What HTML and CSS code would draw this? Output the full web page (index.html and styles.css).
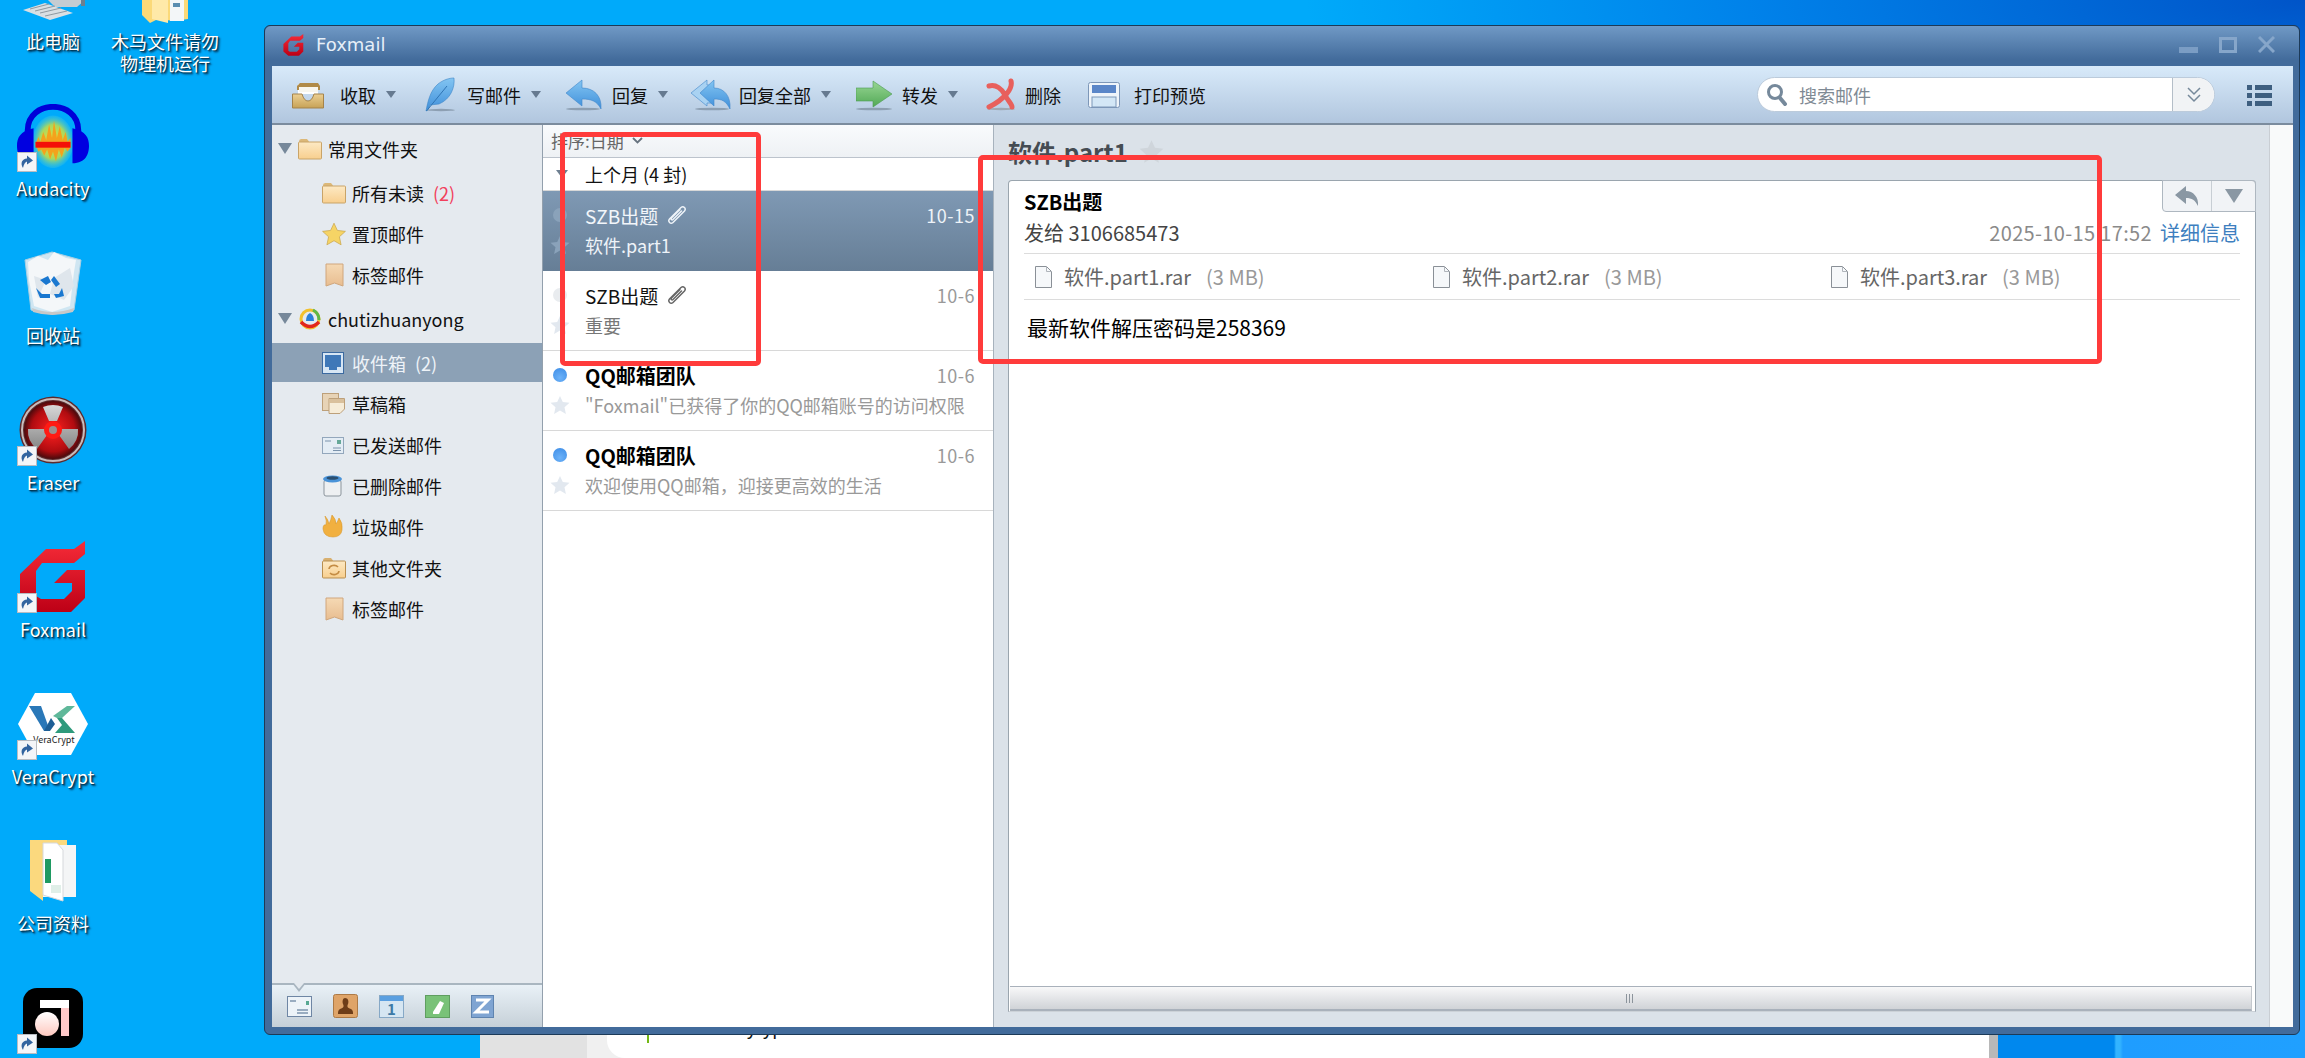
FILE: index.html
```html
<!DOCTYPE html>
<html lang="zh-CN">
<head>
    <meta charset="UTF-8">
    <title>Foxmail</title>
    <link rel="stylesheet" href="styles.css">
</head>
<body>
    <svg class="sprite" width="0" height="0">
        <defs>
            <linearGradient id="gRed" x1="0" y1="0" x2="0" y2="1"><stop offset="0" stop-color="#f62c38"/><stop offset="1" stop-color="#bd0016"/></linearGradient>
            <linearGradient id="gFolder" x1="0" y1="0" x2="0" y2="1"><stop offset="0" stop-color="#fde9c4"/><stop offset="1" stop-color="#f8cf8e"/></linearGradient>
            <linearGradient id="gTag" x1="0" y1="0" x2="0" y2="1"><stop offset="0" stop-color="#f5d9b4"/><stop offset="1" stop-color="#e8bd90"/></linearGradient>
            <linearGradient id="gBlue" x1="0" y1="0" x2="0" y2="1"><stop offset="0" stop-color="#83c5f2"/><stop offset="1" stop-color="#3f8fda"/></linearGradient>
            <linearGradient id="gGreen" x1="0" y1="0" x2="0" y2="1"><stop offset="0" stop-color="#98d694"/><stop offset="1" stop-color="#52a956"/></linearGradient>
            <linearGradient id="gTray" x1="0" y1="0" x2="0" y2="1"><stop offset="0" stop-color="#eccf92"/><stop offset="1" stop-color="#c7a256"/></linearGradient>
            <radialGradient id="gWave"><stop offset="0" stop-color="#f6e030"/><stop offset=".65" stop-color="#a8d860"/><stop offset="1" stop-color="#40c8e0" stop-opacity=".3"/></radialGradient>
            <radialGradient id="gEraser"><stop offset="0" stop-color="#ff2020"/><stop offset=".75" stop-color="#b00c10"/><stop offset="1" stop-color="#4a0a0c"/></radialGradient>
            <linearGradient id="gBlade" x1="0" y1="0" x2="0" y2="1"><stop offset="0" stop-color="#d8d8d8"/><stop offset="1" stop-color="#868686"/></linearGradient>
            <linearGradient id="gBall" x1="0" y1="0" x2="0" y2="1"><stop offset="0" stop-color="#fff"/><stop offset="1" stop-color="#ffc9c0"/></linearGradient>

            <symbol id="i-g" viewBox="0 0 66 72">
                <path fill="url(#gRed)" d="M26 8H54L65 0V13L54 22H22L16 30V55L21 58H44L52 50V42H34L47 29H65V57L51 71H16L0 57V33Z"/>
            </symbol>
            <symbol id="i-short" viewBox="0 0 20 20">
                <rect x=".5" y=".5" width="19" height="19" fill="#f4f5f8" stroke="#b9bcc2"/>
                <path fill="#33649f" d="M6 16C3 11 5 7 10 6.500V3.500L16 8.500 10 12.500V9.500C8 10 7 12 6 16Z"/>
            </symbol>
            <symbol id="i-folder" viewBox="0 0 24 22">
                <path fill="#dcb878" d="M1 3.500Q1 1 3 1H9L11 3.500V6H1Z"/>
                <rect x=".5" y="4" width="23" height="17" rx="1" fill="url(#gFolder)" stroke="#c9a468"/>
            </symbol>
            <symbol id="i-tag" viewBox="0 0 22 24">
                <path fill="url(#gTag)" stroke="#d0a67c" d="M3 1H20V23L11.500 20 3 23Z"/>
            </symbol>
            <symbol id="i-star" viewBox="0 0 20 20">
                <path fill="currentColor" d="M10 1L12.800 7 19.500 7.800 14.500 12.300 15.900 19 10 15.600 4.100 19 5.500 12.300 .5 7.800 7.200 7Z"/>
            </symbol>
            <symbol id="i-file" viewBox="0 0 17 22">
                <path fill="#f6f8fa" stroke="#8a9097" d="M.5 .5H11.500L16.500 5.500V21.500H.5Z"/>
                <path fill="none" stroke="#b0b5bb" d="M11.500 .5V5.500H16.500"/>
            </symbol>
            <symbol id="i-clip" viewBox="0 0 20 20">
                <path fill="none" stroke="currentColor" stroke-width="1.500" stroke-linecap="round" d="M6 17.500L17.500 6C19.500 3.500 16.500 .5 14 2.500L2.500 14C.5 16.500 3.500 19.500 6 17.500M14.500 6L6 14.500C5 15.500 3.500 14.500 4.500 13L13 4.500"/>
            </symbol>
        </defs>
    </svg>

    <div class="desk-corner"></div>

    <div class="under-window">
        <div class="under-rail"></div>
        <div class="under-nav"></div>
        <div class="under-card">
            <span class="under-tick"></span>
            <span class="under-text">About Anytype</span>
        </div>
    </div>

    <div class="desktop-grid">
        <div class="desk-icon">
            <div class="desk-pic">
                <svg width="72" height="72" viewBox="0 0 72 72">
                    <path fill="#c4ccd2" d="M31 47H68L60 54 38 54Z"/>
                    <path fill="#6d7f8e" d="M64 47H68V53H64Z"/>
                    <path fill="#d9dfe3" d="M6 57L28 50 56 60 33 67Z"/>
                    <path stroke="#8f99a1" fill="none" d="M13 56L32 51M18 58L38 53M23 60L44 55M28 63L50 58"/>
                </svg>
            </div>
            <span class="desk-label">此电脑</span>
        </div>
        <div class="desk-icon desk-icon-wide">
            <div class="desk-pic">
                <svg width="50" height="72" viewBox="0 0 50 72">
                    <path fill="#fbd978" d="M2 46H48V66L34 68 18 66 10 70 2 62Z"/>
                    <path fill="#f3f6f8" d="M30 46H44V68H30Z"/>
                    <path fill="#5a8db0" d="M33 50H40V54H33Z"/>
                    <path fill="#ffe9a8" d="M12 46H28V70L12 66Z"/>
                </svg>
            </div>
            <span class="desk-label">木马文件请勿<br>物理机运行</span>
        </div>

        <div class="desk-icon">
            <div class="desk-pic">
                <svg width="74" height="64" viewBox="0 0 74 64">
                    <ellipse cx="37" cy="38" rx="21" ry="27" fill="url(#gWave)"/>
                    <path fill="none" stroke="#0000d8" stroke-width="6" d="M11 34V26C11 -6 63 -6 63 26V34"/>
                    <path fill="#0000e0" d="M17 24V60C3 60 0 50 0 42S3 27 17 24ZM57 24V60C71 60 74 50 74 42S71 27 57 24Z"/>
                    <path fill="#f4a21c" d="M19 40L22 33 24 38 27 28 30 36 33 20 36 34 38 16 41 34 44 22 47 36 50 28 52 38 55 34V44L52 48 49 44 46 54 43 46 40 58 37 48 34 56 31 46 28 52 25 46 22 48Z"/>
                    <rect x="19" y="38" width="36" height="6" fill="#f41008"/>
                </svg>
                <svg class="short-badge" width="20" height="20"><use href="#i-short"/></svg>
            </div>
            <span class="desk-label">Audacity</span>
        </div>
        <div class="desk-icon"></div>

        <div class="desk-icon">
            <div class="desk-pic">
                <svg width="58" height="66" viewBox="0 0 58 66">
                    <path fill="#cfe6f2" stroke="#a9cfe2" d="M1 10L28 2 57 10 50 60Q28 68 7 60Z"/>
                    <path fill="#f4f7f9" d="M4 12L14 6 24 10 30 2 42 8 52 10 50 22 46 56 28 62 10 56 5 30Z"/>
                    <path fill="#dfe6ec" d="M30 28L46 18 50 36 40 50 26 44ZM10 26L22 30 14 48Z"/>
                    <path fill="#1a78d0" d="M16 30L24 26 27 32 22 35ZM30 26L36 34 32 37 27 30ZM12 38L18 44H26V48H16ZM38 38L40 46 32 48 30 44H35Z"/>
                    <path fill="#c8c8c8" d="M8 58Q28 66 50 58L49 62Q28 68 9 62Z"/>
                </svg>
            </div>
            <span class="desk-label">回收站</span>
        </div>
        <div class="desk-icon"></div>

        <div class="desk-icon">
            <div class="desk-pic">
                <svg width="68" height="70" viewBox="0 0 68 70">
                    <circle cx="34" cy="35" r="33.500" fill="#5d2b2d"/>
                    <circle cx="34" cy="35" r="31" fill="none" stroke="#c9bcbc" stroke-width="2"/>
                    <circle cx="34" cy="35" r="29" fill="url(#gEraser)"/>
                    <path fill="url(#gBlade)" d="M24 12Q34 8 44 12L38 26H30ZM9 34H26L28 40 18 54Q8 46 9 34ZM59 34H42L40 40 50 54Q60 46 59 34Z"/>
                    <circle cx="34" cy="35" r="9" fill="#ff1a14"/>
                    <circle cx="34" cy="35" r="4" fill="#9c8f8f"/>
                </svg>
                <svg class="short-badge" width="20" height="20"><use href="#i-short"/></svg>
            </div>
            <span class="desk-label">Eraser</span>
        </div>
        <div class="desk-icon"></div>

        <div class="desk-icon">
            <div class="desk-pic">
                <svg width="66" height="72"><use href="#i-g"/></svg>
                <svg class="short-badge" width="20" height="20"><use href="#i-short"/></svg>
            </div>
            <span class="desk-label">Foxmail</span>
        </div>
        <div class="desk-icon"></div>

        <div class="desk-icon">
            <div class="desk-pic">
                <svg width="72" height="64" viewBox="0 0 72 64">
                    <path fill="#fff" d="M18 1H54L71 32 54 63H18L1 32Z"/>
                    <path fill="#2a78b8" d="M12 14H24L33 39H27Z"/>
                    <path fill="#1d5f96" d="M27 39L34 26 38 32 33 39Z"/>
                    <path fill="#5fb89a" d="M36 24L50 14H58L45 26H40Z"/>
                    <path fill="#2e9a7c" d="M45 26L58 41H38L45 33 40 26Z"/>
                    <text x="37" y="51" class="vera-text">VeraCrypt</text>
                </svg>
                <svg class="short-badge" width="20" height="20"><use href="#i-short"/></svg>
            </div>
            <span class="desk-label">VeraCrypt</span>
        </div>
        <div class="desk-icon"></div>

        <div class="desk-icon">
            <div class="desk-pic">
                <svg width="48" height="64" viewBox="0 0 48 64">
                    <path fill="#f4f5f6" d="M10 6H47V58H10Z"/>
                    <path fill="#fbd97e" d="M1 1H38V6H14V62L1 52Z"/>
                    <path fill="#fff" stroke="#d5d8db" d="M14 4H28L34 11V62L14 56Z"/>
                    <path fill="#1f9a62" d="M16 20H22V44H16Z"/>
                    <path fill="#e0efe8" d="M22 46H32V54H22Z"/>
                </svg>
            </div>
            <span class="desk-label">公司资料</span>
        </div>
        <div class="desk-icon"></div>

        <div class="desk-icon">
            <div class="desk-pic">
                <svg width="60" height="60" viewBox="0 0 60 60">
                    <rect width="60" height="60" rx="14" fill="#000"/>
                    <rect x="17" y="12" width="29" height="8" fill="#fff"/>
                    <rect x="38" y="20" width="8" height="28" fill="#ffc9c9"/>
                    <circle cx="24" cy="36" r="12" fill="url(#gBall)"/>
                </svg>
                <svg class="short-badge" width="20" height="20"><use href="#i-short"/></svg>
            </div>
        </div>
    </div>

    <div class="fox-window">
        <div class="title-bar">
            <svg class="title-logo" width="21" height="22"><use href="#i-g"/></svg>
            <span class="title-text">Foxmail</span>
            <div class="win-controls">
                <svg width="19" height="16" viewBox="0 0 19 16"><rect y="10" width="19" height="6" fill="#7b9dc4"/></svg>
                <svg width="18" height="16" viewBox="0 0 18 16"><rect x="1.500" y="1.500" width="15" height="13" fill="none" stroke="#86a6ca" stroke-width="3"/></svg>
                <svg width="17" height="17" viewBox="0 0 17 17"><path stroke="#86a6ca" stroke-width="3" d="M1 1L16 16M16 1L1 16"/></svg>
            </div>
        </div>

        <div class="toolbar">
            <div class="tools">
                <div class="tool">
                    <svg width="48" height="34" viewBox="0 0 48 34">
                        <path fill="#fff" d="M6 6H26V16H6Z"/>
                        <path fill="#b08a48" d="M5 8L8 5H26L28 8V12H5Z"/>
                        <path fill="#f8f6ee" d="M7 9H26V14H7Z"/>
                        <path fill="url(#gTray)" stroke="#a5834a" d="M.5 16H10Q12 23 16 23T22 16H31.500V30H.5Z"/>
                    </svg>
                    <span>收取</span><i class="caret"></i>
                </div>
                <div class="tool">
                    <svg width="42" height="36" viewBox="0 0 42 36">
                        <path fill="url(#gBlue)" stroke="#3b84c6" stroke-width=".6" d="M29 1C30 10 26 22 14 27L5 28 3 33 1 34C3 24 5 14 13 7 18 3 24 1 29 1Z"/>
                        <path fill="none" stroke="#2f74b4" d="M1.500 34L22 9"/>
                        <ellipse cx="16" cy="33" rx="14" ry="1.200" fill="#8d9fb2"/>
                    </svg>
                    <span>写邮件</span><i class="caret"></i>
                </div>
                <div class="tool">
                    <svg width="47" height="36" viewBox="0 0 47 36">
                        <ellipse cx="18" cy="32" rx="17" ry="1.300" fill="#8d9fb2"/>
                        <path fill="url(#gBlue)" stroke="#4187c9" stroke-width=".6" d="M1 16L17 3V11C29 11 37 19 36 32 32 24 26 22 17 22V29Z"/>
                    </svg>
                    <span>回复</span><i class="caret"></i>
                </div>
                <div class="tool">
                    <svg width="49" height="36" viewBox="0 0 49 36">
                        <ellipse cx="22" cy="32" rx="17" ry="1.300" fill="#8d9fb2"/>
                        <path fill="#a9d2f2" stroke="#4187c9" stroke-width=".6" d="M1 16L17 3V8H22V26H17V29Z"/>
                        <path fill="url(#gBlue)" stroke="#4187c9" stroke-width=".6" d="M10 16L24 3V11C34 11 41 19 40 32 36 24 32 22 24 22V29Z"/>
                    </svg>
                    <span>回复全部</span><i class="caret"></i>
                </div>
                <div class="tool">
                    <svg width="46" height="36" viewBox="0 0 46 36">
                        <ellipse cx="18" cy="32" rx="18" ry="1.300" fill="#8d9fb2"/>
                        <path fill="url(#gGreen)" stroke="#4c9a50" stroke-width=".6" d="M0 11H17V4L36 17 17 30V24H0Z"/>
                    </svg>
                    <span>转发</span><i class="caret"></i>
                </div>
                <div class="tool">
                    <svg width="39" height="36" viewBox="0 0 39 36">
                        <ellipse cx="15" cy="32" rx="14" ry="1.200" fill="#9fa9b4"/>
                        <path fill="none" stroke="#e8605c" stroke-width="5" stroke-linecap="round" d="M3 9C10 7 16 12 19 18S26 27 26 30M25 4C27 11 19 22 3 30"/>
                    </svg>
                    <span>删除</span>
                </div>
                <div class="tool">
                    <svg width="46" height="36" viewBox="0 0 46 36">
                        <rect x=".5" y="5.500" width="31" height="25" rx="2" fill="#eef4fa" stroke="#7d97b8"/>
                        <rect x="4" y="8" width="24" height="8" fill="#5a86c8"/>
                        <rect x="4" y="20" width="24" height="10" fill="#d3e7f6" stroke="#7d97b8"/>
                    </svg>
                    <span>打印预览</span>
                </div>
            </div>
            <div class="search-box">
                <svg class="search-glass" width="22" height="24" viewBox="0 0 22 24">
                    <circle cx="9" cy="9" r="6.500" fill="none" stroke="#76899b" stroke-width="3"/>
                    <path stroke="#76899b" stroke-width="4" stroke-linecap="round" d="M14 15L19 21"/>
                </svg>
                <span class="search-hint">搜索邮件</span>
                <div class="search-more">
                    <svg width="16" height="18" viewBox="0 0 16 18"><path fill="none" stroke="#76899b" stroke-width="1.500" d="M2 2L8 8 14 2M2 9L8 15 14 9"/></svg>
                </div>
            </div>
            <svg class="list-menu" width="25" height="22" viewBox="0 0 25 22">
                <path fill="#3e5f80" d="M0 1H5V6H0ZM8 1H25V6H8ZM0 9H5V14H0ZM8 9H25V14H8ZM0 17H5V22H0ZM8 17H25V22H8Z"/>
            </svg>
        </div>

        <div class="main">
            <aside class="sidebar">
                <div class="tree">
                    <div class="tree-row tree-head">
                        <i class="tree-arrow"></i>
                        <svg class="tree-icon" width="24" height="22"><use href="#i-folder"/></svg>
                        <span>常用文件夹</span>
                    </div>
                    <div class="tree-row">
                        <svg class="tree-icon" width="24" height="22"><use href="#i-folder"/></svg>
                        <span>所有未读</span><em class="count count-red">(2)</em>
                    </div>
                    <div class="tree-row">
                        <svg class="tree-icon tree-star" width="24" height="24"><use href="#i-star"/></svg>
                        <span>置顶邮件</span>
                    </div>
                    <div class="tree-row">
                        <svg class="tree-icon" width="24" height="24"><use href="#i-tag"/></svg>
                        <span>标签邮件</span>
                    </div>
                    <div class="tree-row tree-head">
                        <i class="tree-arrow"></i>
                        <svg class="tree-icon" width="24" height="24" viewBox="0 0 24 24">
                            <circle cx="12" cy="12" r="9" fill="none" stroke="#f2c12e" stroke-width="3"/>
                            <path fill="none" stroke="#e2261c" stroke-width="3.500" d="M3 15Q12 24 21 15"/>
                            <path fill="none" stroke="#5cb848" stroke-width="3" d="M15 3Q21 6 21 13"/>
                            <path fill="#2a80d8" d="M12 6Q16 8 16 14H8Q8 8 12 6Z"/>
                        </svg>
                        <span>chutizhuanyong</span>
                    </div>
                    <div class="tree-row tree-selected">
                        <svg class="tree-icon" width="24" height="22" viewBox="0 0 24 22">
                            <rect x=".5" y=".5" width="21" height="21" fill="#d7e6f4" stroke="#3c6aa0"/>
                            <path fill="#3f78b8" d="M3 3H19V15H15V18H7V15H3Z"/>
                        </svg>
                        <span>收件箱</span><em class="count">(2)</em>
                    </div>
                    <div class="tree-row">
                        <svg class="tree-icon" width="24" height="24" viewBox="0 0 24 24">
                            <rect x=".5" y="1.500" width="16" height="17" fill="#e7d3b6" stroke="#bda07a"/>
                            <path fill="#f6ecd8" stroke="#bda07a" d="M7 6.500H22.500V17L18 21.500H7Z"/>
                            <path fill="#d9c09c" d="M7 7H22V11H7Z"/>
                        </svg>
                        <span>草稿箱</span>
                    </div>
                    <div class="tree-row">
                        <svg class="tree-icon" width="24" height="20" viewBox="0 0 24 20">
                            <rect x=".5" y="2.500" width="21" height="16" fill="#e4edf5" stroke="#93a7bc"/>
                            <path stroke="#7b93ac" d="M3 6H9M11 13H19M11 15.500H19"/>
                            <rect x="15" y="5" width="4" height="4" fill="#65a898"/>
                        </svg>
                        <span>已发送邮件</span>
                    </div>
                    <div class="tree-row">
                        <svg class="tree-icon" width="24" height="24" viewBox="0 0 24 24">
                            <rect x="2" y="6" width="17" height="16" rx="2" fill="#eef0f2" stroke="#8b949c"/>
                            <ellipse cx="10.500" cy="5" rx="9.500" ry="3.500" fill="#4a93d8"/>
                            <ellipse cx="10.500" cy="4" rx="6" ry="1.800" fill="#2b4f70"/>
                        </svg>
                        <span>已删除邮件</span>
                    </div>
                    <div class="tree-row">
                        <svg class="tree-icon" width="24" height="24" viewBox="0 0 24 24">
                            <path fill="#f1b040" stroke="#d89a30" stroke-width=".6" d="M3 1Q6 4 7 9 9 5 10 0 14 4 14 9 16 6 17 3 21 8 20 15 19 22 11 22 2 22 1 14 1 9 4 10 5 6 3 1Z"/>
                        </svg>
                        <span>垃圾邮件</span>
                    </div>
                    <div class="tree-row">
                        <svg class="tree-icon" width="24" height="22" viewBox="0 0 24 22">
                            <path fill="#d8b070" d="M1 3.500Q1 1 3 1H9L11 3.500V6H1Z"/>
                            <rect x=".5" y="4" width="23" height="17" rx="1" fill="url(#gFolder)" stroke="#b98f50"/>
                            <path fill="none" stroke="#c48c44" stroke-width="1.600" d="M7 12A5 4 0 0 1 16 10M17 14A5 4 0 0 1 8 16"/>
                        </svg>
                        <span>其他文件夹</span>
                    </div>
                    <div class="tree-row">
                        <svg class="tree-icon" width="24" height="24"><use href="#i-tag"/></svg>
                        <span>标签邮件</span>
                    </div>
                </div>
                <div class="module-bar">
                    <i class="module-notch"></i>
                    <svg width="25" height="21" viewBox="0 0 25 21">
                        <rect x=".5" y=".5" width="24" height="20" fill="#edf3f8" stroke="#6f86a4"/>
                        <path stroke="#7e95ad" stroke-width="1.500" d="M3 5H9M10 14H21M10 17H21"/>
                        <rect x="19" y="5" width="3" height="4" fill="#58a892"/>
                    </svg>
                    <svg width="25" height="24" viewBox="0 0 25 24">
                        <rect x=".5" y=".5" width="24" height="23" rx="2" fill="#dfa468" stroke="#ad7a46"/>
                        <path fill="#6e3d18" d="M12 4C15 4 16 7 15 10 14 12 14 14 18 15 20 16 20 18 20 20H5C5 18 5 16 7 15 11 14 11 12 10 10 9 7 10 4 12 4Z"/>
                    </svg>
                    <svg width="25" height="23" viewBox="0 0 25 23">
                        <rect x=".5" y=".5" width="24" height="22" fill="#d6e6f2" stroke="#86a8c6"/>
                        <rect x="1" y="1" width="23" height="5" fill="#5a9fe0"/>
                        <text x="12.500" y="20" class="cal-day">1</text>
                    </svg>
                    <svg width="25" height="23" viewBox="0 0 25 23">
                        <rect x=".5" y=".5" width="24" height="22" fill="#79c278" stroke="#5f9e60"/>
                        <path fill="#fff" d="M8 17L15 6 19 8 14 19H8Z"/>
                    </svg>
                    <svg width="23" height="23" viewBox="0 0 23 23">
                        <rect x=".5" y=".5" width="22" height="22" fill="#7fa4d2" stroke="#5f84b0"/>
                        <path fill="none" stroke="#fff" stroke-width="3" d="M5 5H17L5 17H18"/>
                    </svg>
                </div>
            </aside>

            <section class="mail-list">
                <div class="list-sort">
                    <span>排序:日期</span>
                    <svg width="11" height="7" viewBox="0 0 11 7"><path fill="none" stroke="#67737f" stroke-width="1.800" d="M1 1L5.500 5.500 10 1"/></svg>
                </div>
                <div class="list-group"><i class="group-arrow"></i><span>上个月 (4 封)</span></div>

                <div class="mail mail-selected">
                    <i class="dot"></i>
                    <div class="mail-from"><span>SZB出题</span><svg class="clip" width="20" height="20"><use href="#i-clip"/></svg></div>
                    <span class="mail-date">10-15</span>
                    <svg class="mail-star" width="20" height="20"><use href="#i-star"/></svg>
                    <div class="mail-preview">软件.part1</div>
                </div>
                <div class="mail mail-read">
                    <i class="dot"></i>
                    <div class="mail-from"><span>SZB出题</span><svg class="clip" width="20" height="20"><use href="#i-clip"/></svg></div>
                    <span class="mail-date">10-6</span>
                    <svg class="mail-star" width="20" height="20"><use href="#i-star"/></svg>
                    <div class="mail-preview">重要</div>
                </div>
                <div class="mail mail-unread">
                    <i class="dot"></i>
                    <div class="mail-from"><span>QQ邮箱团队</span></div>
                    <span class="mail-date">10-6</span>
                    <svg class="mail-star" width="20" height="20"><use href="#i-star"/></svg>
                    <div class="mail-preview">"Foxmail"已获得了你的QQ邮箱账号的访问权限</div>
                </div>
                <div class="mail mail-unread">
                    <i class="dot"></i>
                    <div class="mail-from"><span>QQ邮箱团队</span></div>
                    <span class="mail-date">10-6</span>
                    <svg class="mail-star" width="20" height="20"><use href="#i-star"/></svg>
                    <div class="mail-preview">欢迎使用QQ邮箱，迎接更高效的生活</div>
                </div>
            </section>

            <section class="reader">
                <div class="reader-main">
                    <div class="reader-title">
                        <h1>软件.part1</h1>
                        <svg class="reader-star" width="25" height="25"><use href="#i-star"/></svg>
                    </div>
                    <div class="card">
                        <div class="card-actions">
                            <div class="action">
                                <svg width="24" height="22" viewBox="0 0 24 22"><path fill="#8a97a3" d="M0 10L11 1V6C18 6 24 12 23 21 20 15 17 13 11 13V19Z"/></svg>
                            </div>
                            <div class="action">
                                <svg width="18" height="14" viewBox="0 0 18 14"><path fill="#8a97a3" d="M0 0H18L9 14Z"/></svg>
                            </div>
                        </div>
                        <div class="card-body">
                            <div class="card-from">SZB出题</div>
                            <div class="card-meta">
                                <span class="card-to">发给 3106685473</span>
                                <span class="card-time">2025-10-15 17:52</span>
                                <a class="card-detail">详细信息</a>
                            </div>
                            <div class="attachments">
                                <div class="attach"><svg width="17" height="22"><use href="#i-file"/></svg><span class="attach-name">软件.part1.rar</span><span class="attach-size">(3 MB)</span></div>
                                <div class="attach"><svg width="17" height="22"><use href="#i-file"/></svg><span class="attach-name">软件.part2.rar</span><span class="attach-size">(3 MB)</span></div>
                                <div class="attach"><svg width="17" height="22"><use href="#i-file"/></svg><span class="attach-name">软件.part3.rar</span><span class="attach-size">(3 MB)</span></div>
                            </div>
                            <p class="message">最新软件解压密码是258369</p>
                        </div>
                        <div class="h-scroll"><span class="grip"></span></div>
                    </div>
                </div>
                <div class="reader-strip"></div>
            </section>
        </div>
    </div>

    <div class="mark mark-list"></div>
    <div class="mark mark-reader"></div>
</body>
</html>
```

FILE: styles.css
```css
* {
    box-sizing: border-box;
}

html, body {
    margin: 0;
    height: 100%;
    overflow: hidden;
}

body {
    position: relative;
    font-family: "Noto Sans CJK SC", "Noto Sans", sans-serif;
    font-size: 18px;
    color: #111;
    background:
        radial-gradient(ellipse 1000px 260px at 2305px 0, #0054c8 0%, rgba(0, 96, 220, 0.55) 55%, rgba(0, 150, 240, 0) 100%),
        #00aafa;
}

.sprite {
    position: absolute;
}

/* desktop behind the mail window */
.desk-corner {
    position: absolute;
    left: 1998px;
    right: 0;
    top: 1000px;
    bottom: 0;
    background: linear-gradient(90deg, #0088ee 0, #0088ee 116px, #33b4ff 118px, #33b4ff 122px, #1f9dff 125px, #20a0ff 100%);
}

.under-window {
    position: absolute;
    left: 480px;
    top: 1000px;
    width: 1518px;
    height: 58px;
    display: flex;
    background: #f0f0f0;
    border-right: 9px solid #b8b8b8;
}

.under-rail {
    width: 107px;
    background: #e2e2e2;
}

.under-nav {
    width: 20px;
}

.under-card {
    flex: 1;
    position: relative;
    background: #fff;
    border-bottom-left-radius: 18px;
}

.under-tick {
    position: absolute;
    left: 40px;
    top: 28px;
    width: 2px;
    height: 15px;
    background: #74b816;
}

.under-text {
    position: absolute;
    left: 63px;
    top: 15px;
    line-height: 24px;
}

.desktop-grid {
    position: absolute;
    left: 0;
    top: -49px;
    height: 1107px;
    overflow: hidden;
    display: grid;
    grid-template-columns: 106px 118px;
    grid-auto-rows: 147px;
}

.desk-icon {
    display: flex;
    flex-direction: column;
    align-items: center;
    padding-top: 2px;
    color: #fff;
    line-height: 22px;
    text-align: center;
    text-shadow: 1px 1px 1px #00344f, 2px 2px 2px rgba(0, 30, 60, 0.8);
}

.desk-pic {
    position: relative;
    width: 72px;
    height: 72px;
    margin-bottom: 5px;
    display: flex;
    align-items: center;
    justify-content: center;
}

.desk-label {
    white-space: nowrap;
}

.short-badge {
    position: absolute;
    left: 0;
    bottom: 0;
}

.vera-text {
    font-size: 9px;
    text-anchor: middle;
    fill: #222;
    text-shadow: none;
}

/* mail window */
.fox-window {
    position: absolute;
    left: 264px;
    top: 25px;
    width: 2036px;
    height: 1010px;
    display: flex;
    flex-direction: column;
    padding: 0 6px 7px 7px;
    background: #426b9b;
    border: 1px solid #1c3a58;
    border-radius: 6px;
}

.title-bar {
    height: 40px;
    flex: none;
    margin: 0 -6px 0 -7px;
    padding: 0 24px 3px 18px;
    display: flex;
    align-items: center;
    border-radius: 6px 6px 0 0;
    background: linear-gradient(#7099c5, #426b9b 85%);
}

.title-text {
    margin-left: 12px;
    font-family: "DejaVu Sans", sans-serif;
    font-size: 18px;
    color: #e6eff8;
}

.win-controls {
    margin-left: auto;
    display: flex;
    align-items: center;
    gap: 21px;
}

.toolbar {
    height: 59px;
    flex: none;
    display: flex;
    align-items: center;
    padding: 0 21px 0 20px;
    background: linear-gradient(#d8eafa, #b1c6de);
    border-bottom: 2px solid #7b8c9e;
}

.tools {
    flex: 1;
    display: grid;
    grid-template-columns: 133px 140px 125px 166px 130px 102px 1fr;
}

.tool {
    display: flex;
    align-items: center;
    white-space: nowrap;
}

.caret {
    margin-left: 10px;
    border-top: 7px solid #667a90;
    border-left: 5px solid transparent;
    border-right: 5px solid transparent;
}

.search-box {
    width: 458px;
    height: 35px;
    display: flex;
    align-items: center;
    background: #fff;
    border: 1px solid #bccbdb;
    border-radius: 18px;
    padding-left: 8px;
}

.search-hint {
    margin-left: 11px;
    color: #7f8a94;
}

.search-more {
    margin-left: auto;
    width: 42px;
    height: 100%;
    display: flex;
    align-items: center;
    justify-content: center;
    background: #f1f3f5;
    border-left: 1px solid #b4bec8;
    border-radius: 0 18px 18px 0;
}

.list-menu {
    margin-left: 32px;
}

.main {
    flex: 1;
    min-height: 0;
    display: flex;
}

/* folder tree */
.sidebar {
    width: 271px;
    flex: none;
    display: flex;
    flex-direction: column;
    background: #e5eaef;
    border-right: 1px solid #93a0ad;
}

.tree {
    flex: 1;
}

.tree-row {
    height: 41px;
    display: flex;
    align-items: center;
    padding-left: 50px;
}

.tree-head {
    margin: 3px 0;
    padding-left: 6px;
}

.tree-arrow {
    margin-right: 6px;
    border-top: 11px solid #76889a;
    border-left: 7px solid transparent;
    border-right: 7px solid transparent;
}

.tree-icon {
    flex: none;
    margin-right: 6px;
}

.tree-star {
    color: #f6d465;
    stroke: #c9a548;
    stroke-width: 0.6;
}

.count {
    margin-left: 9px;
    font-style: normal;
}

.count-red {
    color: #f2405c;
}

.tree-selected {
    height: 39px;
    margin: 4px 0 1px;
    background: #8ca1b6;
    color: #eef3f8;
}

.module-bar {
    position: relative;
    height: 44px;
    flex: none;
    display: flex;
    align-items: center;
    gap: 21px;
    padding-left: 15px;
    background: linear-gradient(#e9f1f7, #c6d0d8);
    border-top: 2px solid #a9b6c0;
}

.module-notch {
    position: absolute;
    left: 20px;
    top: -2px;
    width: 14px;
    height: 9px;
    background: #a9b6c0;
    clip-path: polygon(0 0, 100% 0, 50% 100%);
}

.module-notch::after {
    content: "";
    position: absolute;
    left: 2px;
    top: 0;
    width: 10px;
    height: 6px;
    background: #e5eaef;
    clip-path: polygon(0 0, 100% 0, 50% 100%);
}

.cal-day {
    font-size: 15px;
    font-weight: 700;
    text-anchor: middle;
    fill: #3d7aa6;
}

/* message list */
.mail-list {
    width: 451px;
    flex: none;
    background: #fff;
    border-right: 1px solid #a7b2bd;
}

.list-sort {
    height: 33px;
    display: flex;
    align-items: center;
    gap: 8px;
    padding: 0 0 2px 8px;
    color: #666;
    font-size: 17px;
    background: linear-gradient(#f9fbfd, #eef1f4);
    border-bottom: 1px solid #bcc3cc;
}

.list-group {
    height: 33px;
    display: flex;
    align-items: center;
    border-bottom: 1px solid #d8d8d8;
}

.group-arrow {
    margin: 0 17px 0 13px;
    border-top: 8px solid #6e7f90;
    border-left: 6px solid transparent;
    border-right: 6px solid transparent;
}

.mail {
    height: 80px;
    padding: 9px 18px 0 0;
    display: grid;
    grid-template-columns: 42px 1fr auto;
    grid-template-rows: 30px 30px;
    align-items: center;
    border-bottom: 1px solid #d8d8d8;
}

.dot {
    justify-self: center;
    margin-left: -8px;
    width: 14px;
    height: 14px;
    border-radius: 50%;
    background: #e9ecef;
}

.mail-from {
    display: flex;
    align-items: center;
    gap: 9px;
    font-size: 19px;
}

.clip {
    color: #666;
}

.mail-date {
    color: #999;
    letter-spacing: 0.5px;
}

.mail-star {
    justify-self: center;
    margin-left: -8px;
    color: #e2e8ef;
}

.mail-preview {
    grid-column: 2 / 4;
    color: #999;
    white-space: nowrap;
}

.mail-selected {
    border-bottom: none;
    color: #f2f6fa;
    background: linear-gradient(#7f99b4, #667e96);
}

.mail-selected .dot {
    background: #8aa2ba;
}

.mail-selected .clip,
.mail-selected .mail-date,
.mail-selected .mail-preview {
    color: #eef3f8;
}

.mail-selected .mail-star {
    color: #8aa2ba;
}

.mail-read .mail-preview {
    color: #777;
}

.mail-unread .mail-from {
    font-size: 20px;
    font-weight: 700;
    color: #000;
}

.mail-unread .dot {
    background: radial-gradient(circle at 50% 70%, #6db2f8, #3c8ce6);
}

/* reading pane */
.reader {
    flex: 1;
    min-width: 0;
    display: flex;
    background: #dbe2e9;
}

.reader-main {
    flex: 1;
    min-width: 0;
    display: flex;
    flex-direction: column;
    padding: 0 13px 15px 14px;
}

.reader-title {
    height: 55px;
    flex: none;
    display: flex;
    align-items: center;
    gap: 11px;
    padding-bottom: 3px;
}

.reader-title h1 {
    margin: 0;
    font-size: 24px;
    font-weight: 700;
    color: #454c53;
}

.reader-star {
    color: #cfd5db;
}

.card {
    position: relative;
    flex: 1;
    display: flex;
    flex-direction: column;
    background: #fff;
    border: 1px solid #9aa5ae;
    border-bottom-color: #ccd2d8;
    border-radius: 4px 4px 0 0;
}

.card-actions {
    position: absolute;
    top: -1px;
    right: -1px;
    width: 94px;
    height: 32px;
    display: flex;
    background: #f1f3f6;
    border: 1px solid #aeb7c0;
    border-radius: 0 4px 0 4px;
}

.action {
    display: flex;
    align-items: center;
    justify-content: center;
    width: 48px;
}

.action + .action {
    flex: 1;
    border-left: 1px solid #c8ced4;
}

.card-body {
    flex: 1;
    padding: 8px 15px 0 15px;
    font-size: 20px;
}

.card-from {
    line-height: 26px;
    font-weight: 700;
    color: #000;
}

.card-meta {
    height: 34px;
    margin-top: 5px;
    display: flex;
    align-items: flex-start;
    line-height: 26px;
    border-bottom: 1px solid #dcdcdc;
}

.card-to {
    color: #444;
}

.card-time {
    margin-left: auto;
    color: #8a8a8a;
    letter-spacing: 0.35px;
}

.card-detail {
    margin-left: 8px;
    color: #3e7fbf;
}

.attachments {
    height: 46px;
    padding-left: 11px;
    display: grid;
    grid-template-columns: repeat(3, 398px);
    align-items: center;
    border-bottom: 1px solid #dcdcdc;
}

.attach {
    display: flex;
    align-items: center;
}

.attach-name {
    margin-left: 12px;
    color: #666;
}

.attach-size {
    margin-left: 15px;
    color: #999;
}

.message {
    margin: 14px 0 0 3px;
    font-size: 21px;
    line-height: 26px;
    color: #000;
}

.h-scroll {
    height: 25px;
    flex: none;
    margin: 0 3px 0 1px;
    display: flex;
    align-items: center;
    justify-content: center;
    background: linear-gradient(#f8f8f9, #d0d3d7);
    border: 1px solid #a9b1bb;
    border-width: 1px 0 2px;
    border-right: 1px solid #c4c8cd;
}

.grip {
    width: 9px;
    height: 9px;
    background: repeating-linear-gradient(90deg, #8c949c 0 1px, transparent 1px 3px);
}

.reader-strip {
    width: 24px;
    flex: none;
    background: #f9fafa;
    border-left: 1px solid #c9ced4;
}

/* red annotation boxes drawn over the screenshot */
.mark {
    position: absolute;
    border: 5px solid #ff3b3b;
    border-radius: 5px;
}

.mark-list {
    left: 560px;
    top: 132px;
    width: 201px;
    height: 234px;
}

.mark-reader {
    left: 978px;
    top: 155px;
    width: 1124px;
    height: 209px;
}
```
